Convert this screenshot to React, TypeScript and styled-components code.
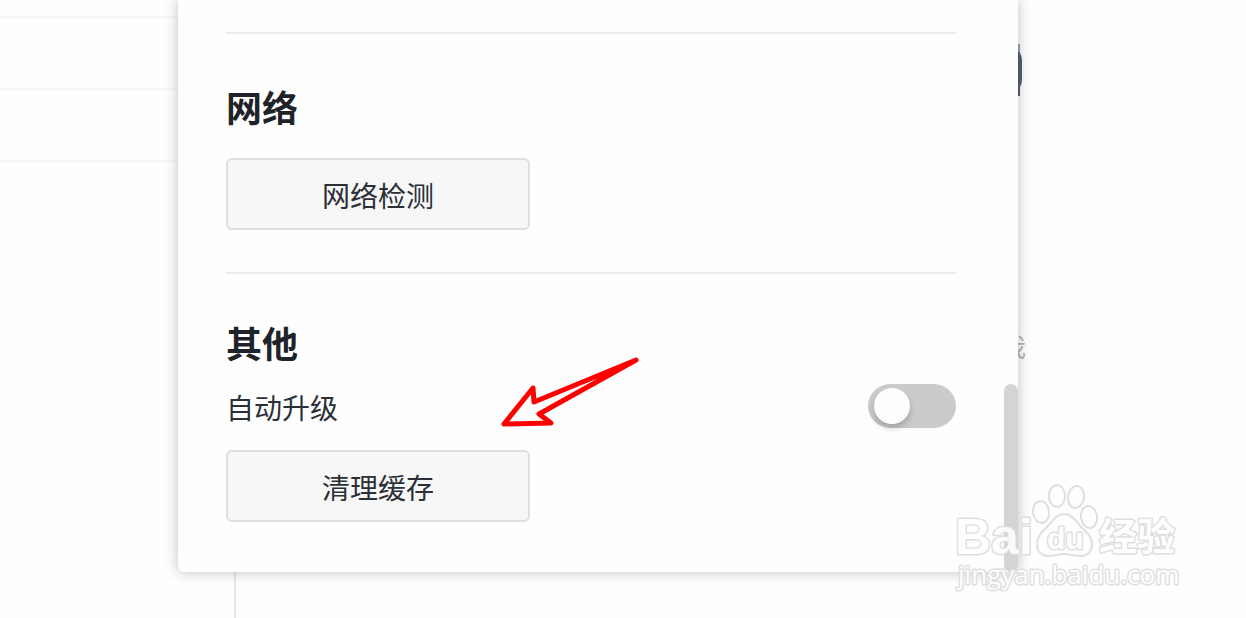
import React, { useState } from "react";
import styled, { createGlobalStyle } from "styled-components";

const GlobalStyle = createGlobalStyle`
  * { box-sizing: border-box; }
  body {
    margin: 0;
    background: #fefefe;
    color: #1f2329;
    font-family: "Noto Sans CJK SC", sans-serif;
  }
`;

const Page = styled.div`
  position: relative;
  display: grid;
  grid-template-columns: 178px minmax(0, 1fr) 228px;
  min-height: 100vh;
  overflow: hidden;
`;

const Backdrop = styled.div`
  grid-area: 1 / 1 / 2 / 4;
  display: grid;
  grid-template-columns: 236px minmax(0, 1fr) 246px;
`;

const Sidebar = styled.ul`
  margin: 0;
  padding: 0;
  list-style: none;
  border-right: 2px solid #e6e6e6;
`;

const SidebarRow = styled.li<{ $first?: boolean }>`
  height: ${(p) => (p.$first ? 18 : 72)}px;
  border-bottom: 2px solid #f7f7f7;
`;

const MainArea = styled.div`
  min-width: 0;
`;

const Aside = styled.div`
  display: flex;
  flex-direction: column;
  align-items: flex-start;
  padding-top: 44px;
`;

const Avatar = styled.svg`
  display: block;
  width: 24px;
  height: 52px;
`;

const AsideText = styled.span`
  margin-top: 232px;
  font-size: 26px;
  line-height: 36px;
  color: #b5b5b5;
`;

const Dialog = styled.section`
  grid-area: 1 / 2 / 2 / 3;
  align-self: start;
  display: grid;
  grid-template-columns: minmax(0, 1fr) 14px;
  background: #fefefe;
  border-radius: 0 0 6px 6px;
  box-shadow: 0 0 14px rgba(0, 0, 0, 0.25);
  z-index: 1;
`;

const Content = styled.div`
  padding: 32px 48px 50px;
`;

const ScrollTrack = styled.div`
  display: flex;
  align-items: flex-end;
`;

const ScrollThumb = styled.div`
  width: 14px;
  height: 188px;
  border-radius: 7px;
  background: #d4d4d4;
`;

const Group = styled.section<{ $top: number; $bottom: number }>`
  border-top: 2px solid #ececec;
  padding: ${(p) => p.$top}px 0 ${(p) => p.$bottom}px;
`;

const Heading = styled.h2<{ $gap: number }>`
  margin: 0 0 ${(p) => p.$gap}px;
  font-size: 36px;
  font-weight: 700;
  line-height: 48px;
`;

const ActionButton = styled.button`
  display: block;
  width: 304px;
  height: 72px;
  padding: 2px 0 0;
  border: 2px solid #dfdfdf;
  border-radius: 6px;
  background: #f7f7f7;
  color: #2b2f36;
  font-family: inherit;
  font-size: 28px;
  line-height: 40px;
`;

const SettingRow = styled.div`
  display: flex;
  align-items: center;
  justify-content: space-between;
  height: 44px;
  margin-bottom: 22px;
`;

const SettingLabel = styled.label`
  padding-top: 2px;
  color: #2b2f36;
  font-size: 28px;
  line-height: 44px;
`;

const Switch = styled.input`
  appearance: none;
  display: flex;
  align-items: center;
  width: 88px;
  height: 44px;
  margin: 0;
  padding: 0 6px;
  border-radius: 22px;
  background: #cbcbcb;

  &::before {
    content: "";
    width: 36px;
    height: 36px;
    border-radius: 50%;
    background: #fefefe;
    box-shadow: 0 4px 6px rgba(0, 0, 0, 0.2);
  }
  &:checked {
    justify-content: flex-end;
    background: #3370ff;
  }
`;

const Arrow = styled.svg`
  position: absolute;
  left: 498px;
  top: 354px;
  width: 144px;
  height: 76px;
  z-index: 2;
  pointer-events: none;
`;

const Watermark = styled.svg`
  position: absolute;
  right: 62px;
  top: 478px;
  width: 234px;
  height: 116px;
  z-index: 2;
  pointer-events: none;
`;

function BaiduMark() {
  return (
    <Watermark viewBox="0 0 234 116" role="img" aria-label="Baidu 经验 jingyan.baidu.com">
      <g
        fill="#ffffff"
        stroke="#dcdcdc"
        strokeWidth="2"
        strokeLinejoin="round"
        opacity="0.9"
      >
        <ellipse cx="91" cy="34" rx="8" ry="11" transform="rotate(-6 91 34)" />
        <ellipse cx="107" cy="18" rx="8" ry="11" />
        <ellipse cx="126" cy="19" rx="8" ry="11" transform="rotate(8 126 19)" />
        <ellipse cx="139" cy="39" rx="8" ry="11" transform="rotate(-8 139 39)" />
        <path d="M114 36 C106 36 102 44 97 49 C91 55 87 59 87 66 C87 74 92 78 99 78 C105 78 108 76 114 76 C120 76 124 78 131 78 C138 78 142 73 142 66 C142 58 136 54 131 49 C126 43 122 36 114 36 Z" />
        <g paintOrder="stroke" strokeWidth="3">
          <text x="5" y="76" fontFamily="Liberation Sans, sans-serif" fontWeight="700" fontSize="50">Bai</text>
          <text x="97" y="71" fontFamily="Liberation Sans, sans-serif" fontWeight="700" fontSize="30">du</text>
          <text x="149" y="72" fontFamily="Noto Sans CJK SC, sans-serif" fontWeight="700" fontSize="38">经验</text>
          <text x="8" y="106" fontFamily="Open Sans, sans-serif" fontSize="26">jingyan.baidu.com</text>
        </g>
      </g>
    </Watermark>
  );
}

export default function App() {
  const [autoUpdate, setAutoUpdate] = useState(false);
  return (
    <>
      <GlobalStyle />
      <Page>
        <Backdrop aria-hidden="true">
          <Sidebar>
            <SidebarRow $first />
            <SidebarRow />
            <SidebarRow />
          </Sidebar>
          <MainArea />
          <Aside>
            <Avatar viewBox="0 0 24 52">
              <path d="M0 0 H20 V9 Q22 12 22 16 V36 Q22 40 20 43 V52 H0 Z" fill="#566172" />
              <path d="M0 0 H20 V8 H0 Z" fill="#8fa6c4" />
            </Avatar>
            <AsideText>我</AsideText>
          </Aside>
        </Backdrop>
        <Dialog aria-label="设置">
          <Content>
            <Group $top={48} $bottom={42}>
              <Heading $gap={28}>网络</Heading>
              <ActionButton type="button">网络检测</ActionButton>
            </Group>
            <Group $top={44} $bottom={0}>
              <Heading $gap={18}>其他</Heading>
              <SettingRow>
                <SettingLabel htmlFor="auto-update">自动升级</SettingLabel>
                <Switch
                  id="auto-update"
                  type="checkbox"
                  role="switch"
                  checked={autoUpdate}
                  onChange={(e) => setAutoUpdate(e.target.checked)}
                />
              </SettingRow>
              <ActionButton type="button">清理缓存</ActionButton>
            </Group>
          </Content>
          <ScrollTrack>
            <ScrollThumb />
          </ScrollTrack>
        </Dialog>
        <Arrow viewBox="0 0 144 76" aria-hidden="true">
          <path
            d="M138 6 L36 48 L35 34 L6 70 L53 69 L41 60 Z"
            fill="#fefefe"
            stroke="#ff0000"
            strokeWidth="5"
            strokeLinejoin="round"
          />
        </Arrow>
        <BaiduMark />
      </Page>
    </>
  );
}
